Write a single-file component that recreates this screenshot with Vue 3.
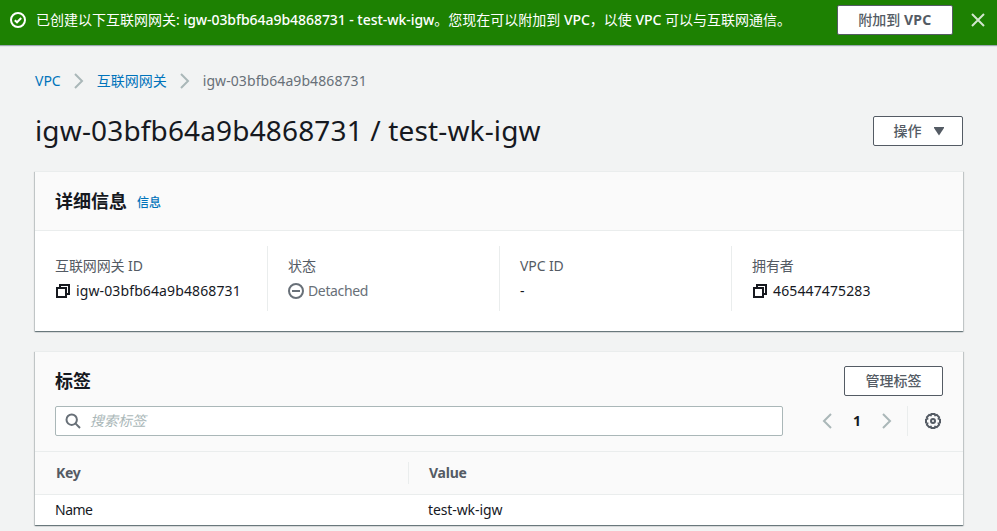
<script setup>
const columns = [
  { label: '互联网网关 ID', value: 'igw-03bfb64a9b4868731', icon: 'copy' },
  { label: '状态', value: 'Detached', icon: 'detached' },
  { label: 'VPC ID', value: '-', icon: '' },
  { label: '拥有者', value: '465447475283', icon: 'copy' },
]
const tags = [{ key: 'Name', value: 'test-wk-igw' }]
</script>

<template>
  <div class="page">
    <header class="flash">
      <svg class="ic" viewBox="0 0 16 16"><circle cx="8" cy="8" r="7" /><path d="M4.8 8.2 7 10.3 11.2 6" /></svg>
      <p class="message">已创建以下互联网网关: <span class="latin">igw-03bfb64a9b4868731 - test-wk-igw</span>。您现在可以附加到 <span class="latin">VPC</span>，以使 <span class="latin">VPC</span> 可以与互联网通信。</p>
      <button class="btn attach">附加到&nbsp;<b>VPC</b></button>
      <svg class="ic close" viewBox="0 0 16 16"><path d="M2 2 14 14M14 2 2 14" /></svg>
    </header>

    <main class="content">
      <nav class="crumbs">
        <a>VPC</a>
        <svg class="ic chev" viewBox="0 0 16 16"><path d="M4 1 11 8 4 15" /></svg>
        <a>互联网网关</a>
        <svg class="ic chev" viewBox="0 0 16 16"><path d="M4 1 11 8 4 15" /></svg>
        <span class="here">igw-03bfb64a9b4868731</span>
      </nav>

      <div class="title-row">
        <h1>igw-03bfb64a9b4868731 / test-wk-igw</h1>
        <button class="btn actions">操作<svg class="tri" viewBox="0 0 10 9"><path d="M0 0H10V1L5 8.5 0 1Z" /></svg></button>
      </div>

      <section class="card details">
        <div class="card-head"><h2>详细信息</h2><a class="info">信息</a></div>
        <div class="cols">
          <div v-for="c in columns" :key="c.label" class="col">
            <div class="label">{{ c.label }}</div>
            <div class="value" :class="{ muted: c.icon === 'detached' }">
              <svg v-if="c.icon === 'copy'" class="ic copy" viewBox="0 0 16 16"><path d="M2 5H11V14H2Z" /><path d="M5 5V2H14V11H11" /></svg>
              <svg v-if="c.icon === 'detached'" class="ic" viewBox="0 0 16 16"><circle cx="8" cy="8" r="7" /><path d="M4 8H12" /></svg>
              <span>{{ c.value }}</span>
            </div>
          </div>
        </div>
      </section>

      <section class="card tags">
        <div class="tags-head">
          <div class="tags-title"><h2>标签</h2><button class="btn manage">管理标签</button></div>
          <div class="tools">
            <div class="search">
              <svg class="ic" viewBox="0 0 16 16"><circle cx="6.7" cy="6.7" r="5.2" /><path d="M10.4 10.4 15 15" /></svg>
              <span>搜索标签</span>
            </div>
            <div class="pager">
              <svg class="ic chev" viewBox="0 0 16 16"><path d="M12 1 5 8 12 15" /></svg>
              <b>1</b>
              <svg class="ic chev" viewBox="0 0 16 16"><path d="M4 1 11 8 4 15" /></svg>
            </div>
            <div class="settings">
              <svg class="ic gear" viewBox="0 0 16 16"><path d="M6.4 1H9.6L10.2 2.4 11.8 1.9 14.1 4.2 13.6 5.8 15 6.4V9.6L13.6 10.2 14.1 11.8 11.8 14.1 10.2 13.6 9.6 15H6.4L5.8 13.6 4.2 14.1 1.9 11.8 2.4 10.2 1 9.6V6.4L2.4 5.8 1.9 4.2 4.2 1.9 5.8 2.4Z" /><circle cx="8" cy="8" r="2" /></svg>
            </div>
          </div>
        </div>
        <div class="row thead"><div class="cell">Key</div><div class="cell second">Value</div></div>
        <div v-for="t in tags" :key="t.key" class="row"><div class="cell">{{ t.key }}</div><div class="cell">{{ t.value }}</div></div>
      </section>
    </main>
  </div>
</template>

<style>
body { background: #f2f3f3; overflow: hidden; }
</style>

<style scoped>
* { box-sizing: border-box; margin: 0; }
.page { width: 997px; height: 531px; overflow: hidden; background: #f2f3f3; color: #16191f; font: 14px/22px "Noto Sans", "Noto Sans CJK SC", sans-serif; white-space: nowrap; }
.ic { width: 16px; height: 16px; flex: none; fill: none; stroke: currentColor; stroke-width: 2; display: block; }
.flash { height: 45px; background: #1d8102; color: #fff; display: flex; align-items: center; padding: 0 11px 5px 10px; box-shadow: 0 1px 1px #9ba7b0; }
.message { margin-left: 10px; flex: 1; }
.latin { font-weight: 500; letter-spacing: -0.05px; }
.btn { height: 30px; border: 1px solid #545b64; border-radius: 2px; background: #fff; color: #545b64; font: 500 14px/20px "Noto Sans", "Noto Sans CJK SC", sans-serif; padding: 0; display: flex; align-items: center; justify-content: center; flex: none; }
.btn b { letter-spacing: 0.3px; }
.attach { width: 116px; }
.close { margin-left: 17px; color: #d2e6cd; }
.content { padding: 25px 34px 0 35px; }
.crumbs { display: flex; align-items: center; height: 22px; color: #687078; }
.crumbs a, .info { color: #0073bb; }
.here { letter-spacing: 0.08px; }
.chev { color: #aab7b8; }
.crumbs .chev { margin: 0 10px; }
.title-row { display: flex; justify-content: space-between; align-items: center; height: 30px; margin-top: 24px; }
h1 { font-size: 28px; line-height: 36px; font-weight: 400; letter-spacing: 0.15px; padding-bottom: 2px; }
.actions { width: 90px; gap: 12px; padding-left: 1px; }
.tri { width: 10px; height: 9px; fill: #545b64; }
.card { background: #fff; border-top: 1px solid #eaeded; box-shadow: 0 1px 1px 0 rgba(0, 28, 36, .4), 1px 1px 1px 0 rgba(0, 28, 36, .15), -1px 1px 1px 0 rgba(0, 28, 36, .15); }
.details { height: 160px; margin-top: 25px; }
.card-head { height: 59px; background: #fafafa; border-bottom: 1px solid #eaeded; display: flex; align-items: center; padding: 0 20px; }
h2 { font-size: 18px; line-height: 22px; font-weight: 700; }
.info { font-size: 12px; font-weight: 500; margin: 3px 0 0 10px; }
.cols { display: grid; grid-template-columns: repeat(4, 232px); padding-top: 15px; }
.col { height: 65px; padding: 9px 0 0 20px; border-left: 1px solid #eaeded; }
.col:first-child { border-left: 0; }
.label { color: #545b64; letter-spacing: -0.1px; }
.value { display: flex; align-items: center; gap: 5px; height: 22px; margin-top: 3px; letter-spacing: 0.12px; }
.muted { color: #687078; gap: 4px; letter-spacing: -0.35px; }
.tags { height: 174px; margin-top: 20px; }
.tags-head { height: 100px; background: #fafafa; border-bottom: 1px solid #eaeded; padding: 14px 20px 0; }
.tags-title { display: flex; justify-content: space-between; height: 30px; align-items: center; }
.manage { width: 99px; }
.tools { display: flex; margin-top: 10px; height: 30px; }
.search { width: 728px; border: 1px solid #aab7b8; border-radius: 2px; background: #fff; display: flex; align-items: center; gap: 9px; padding-left: 9px; color: #687078; }
.search span { color: #aab7b8; font-style: italic; }
.pager { display: flex; align-items: center; margin-left: 36px; }
.pager b { width: 44px; text-align: center; }
.settings { margin-left: 12px; border-left: 1px solid #eaeded; padding: 7px 0 0 17px; color: #545b64; }
.row { display: grid; grid-template-columns: 373px 1fr; height: 30px; align-items: center; }
.cell { padding-left: 20px; letter-spacing: -0.1px; }
.row:not(.thead) .cell:first-child { letter-spacing: -0.5px; }
.thead { height: 43px; background: #fafafa; border-bottom: 1px solid #eaeded; color: #545b64; font-weight: 700; }
.thead .cell { padding-left: 21px; letter-spacing: -0.25px; }
.thead .second { border-left: 1px solid #eaeded; padding-left: 20px; }
</style>
